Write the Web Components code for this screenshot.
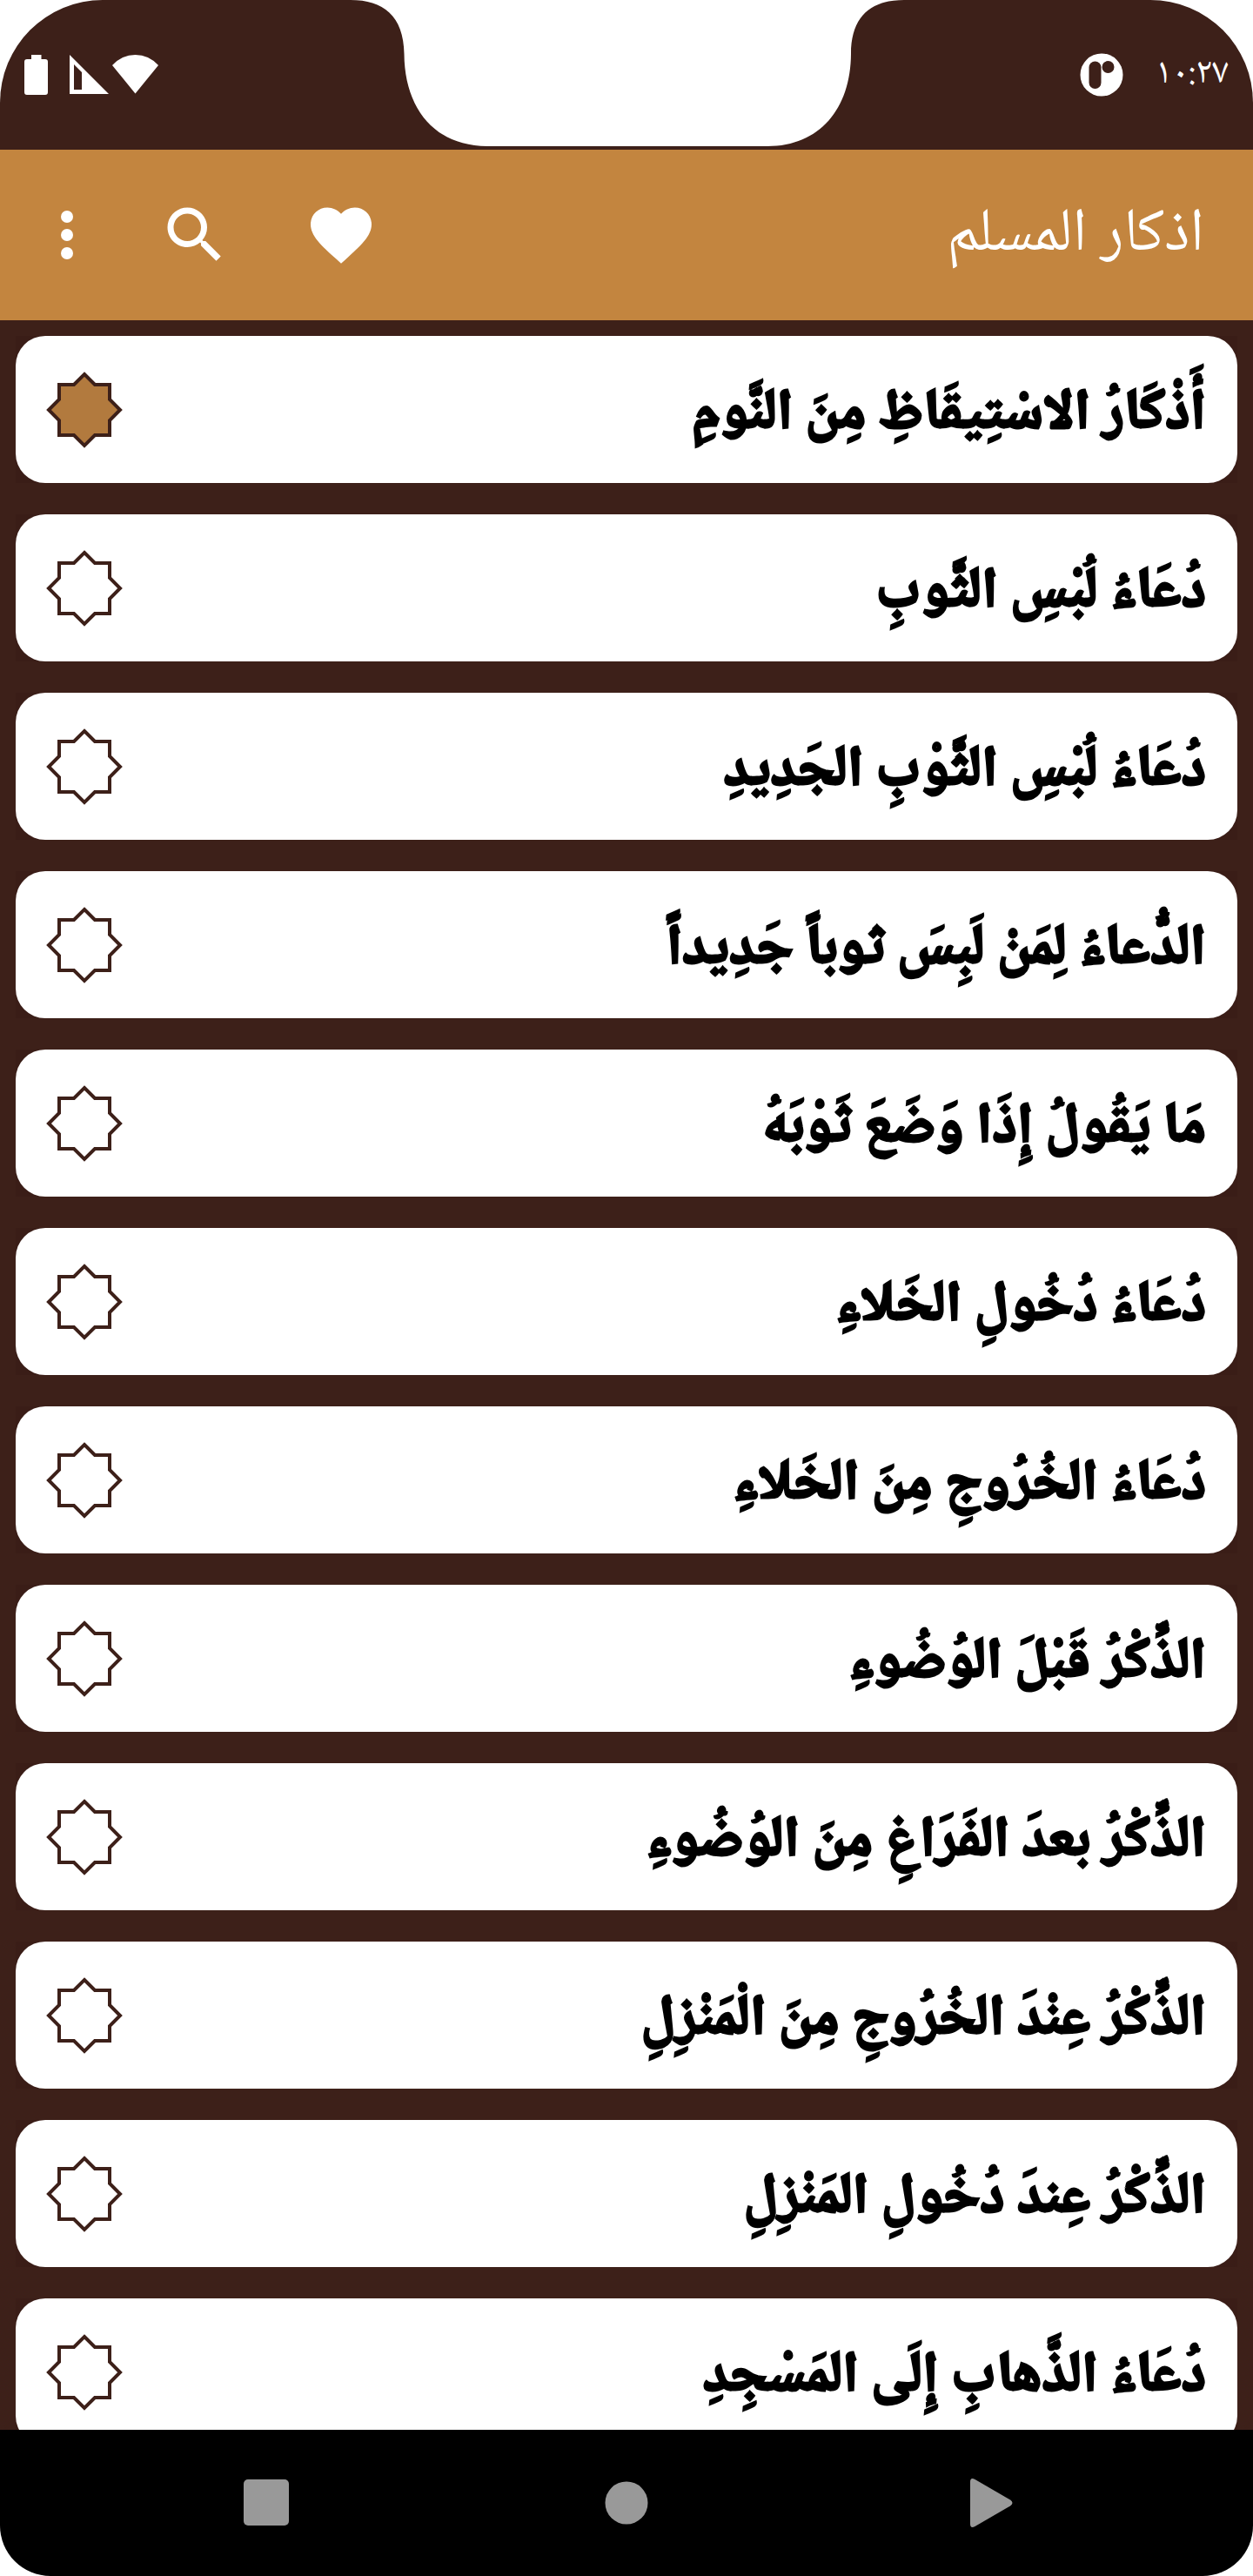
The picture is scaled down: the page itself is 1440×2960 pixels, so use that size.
<!DOCTYPE html>
<html lang="ar" dir="rtl">
<head>
<meta charset="utf-8">
<meta name="viewport" content="width=device-width, initial-scale=1">
<title>اذكار المسلم</title>
<style>
  :root {
    --brown: #3d2019;
    --brown-deep: #3a1d17;
    --gold: #c3853f;
    --gold-dark: #b27a3e;
    --nav-icon: #999;
  }
  html, body { margin: 0; background: #fff; }
  body { font-family: "Noto Naskh Arabic", "Noto Sans Arabic", "DejaVu Sans", sans-serif; }
</style>
</head>
<body>
<app-screen>
  <status-bar slot="status" time="١٠:٢٧"></status-bar>
  <app-bar slot="bar">اذكار المسلم</app-bar>
  <dhikr-card marked>أَذْكَارُ الاسْتِيقَاظِ مِنَ النَّومِ</dhikr-card>
  <dhikr-card>دُعَاءُ لُبْسِ الثَّوبِ</dhikr-card>
  <dhikr-card>دُعَاءُ لُبْسِ الثَّوْبِ الجَدِيدِ</dhikr-card>
  <dhikr-card>الدُّعاءُ لِمَنْ لَبِسَ ثوباً جَدِيداً</dhikr-card>
  <dhikr-card>مَا يَقُولُ إِذَا وَضَعَ ثَوْبَهُ</dhikr-card>
  <dhikr-card>دُعَاءُ دُخُولِ الخَلاءِ</dhikr-card>
  <dhikr-card>دُعَاءُ الخُرُوجِ مِنَ الخَلاءِ</dhikr-card>
  <dhikr-card>الذِّكْرُ قَبْلَ الوُضُوءِ</dhikr-card>
  <dhikr-card>الذِّكْرُ بعدَ الفَرَاغِ مِنَ الوُضُوءِ</dhikr-card>
  <dhikr-card>الذِّكْرُ عِنْدَ الخُرُوجِ مِنَ الْمَنْزِلِ</dhikr-card>
  <dhikr-card>الذِّكْرُ عِندَ دُخُولِ المَنْزِلِ</dhikr-card>
  <dhikr-card>دُعَاءُ الذَّهابِ إِلَى المَسْجِدِ</dhikr-card>
  <nav-bar slot="nav"></nav-bar>
</app-screen>
<script>
const define = (name, html, setup) => {
  const template = document.createElement('template');
  template.innerHTML = html;
  customElements.define(name, class extends HTMLElement {
    constructor() {
      super();
      this.attachShadow({ mode: 'open' }).append(template.content.cloneNode(true));
    }
    connectedCallback() { if (setup) setup(this, this.shadowRoot); }
  });
};

define('app-screen', `
  <style>
    :host { display: flex; flex-direction: column; height: 100vh; overflow: hidden; }
    main {
      flex: 1; min-height: 0; overflow: hidden;
      display: flex; flex-direction: column; gap: 36px;
      padding: 18px 18px 0; background: var(--brown);
    }
  </style>
  <slot name="status"></slot>
  <slot name="bar"></slot>
  <main><slot></slot></main>
  <slot name="nav"></slot>`);

define('status-bar', `
  <style>
    :host {
      display: flex; flex: none; align-items: center; justify-content: space-between;
      box-sizing: border-box; height: 172px; padding: 0 28px;
      position: relative; background: var(--brown); color: #fff;
      border-radius: 118px 118px 0 0;
    }
    div { display: flex; align-items: center; }
    .start { gap: 37px; }
    .end { direction: ltr; }
    svg { display: block; }
    .notch { position: absolute; top: 0; left: 28%; width: 636px; height: 169px; }
    time { font-size: 42px; line-height: 60px; }
  </style>
  <div class="start">
    <time></time>
    <svg width="50" height="50" viewBox="0 0 50 50" aria-hidden="true">
      <circle cx="25" cy="25" r="24.5" fill="#fff"/>
      <rect x="10.500" y="9.500" width="14" height="31.500" rx="7" fill="#3d2019"/>
      <circle cx="32.500" cy="16" r="7" fill="#3d2019"/>
    </svg>
  </div>
  <svg class="notch" viewBox="403 0 636 169" aria-hidden="true">
    <path fill="#fff" d="M403 0C440 0 464 18 464.500 62C465 125 500 168 560 168H882C942 168 977.500 125 978 62C978 18 1002 0 1039 0Z"/>
  </svg>
  <div class="end">
    <svg width="155" height="50" viewBox="28 61 155 50" fill="#fff" aria-hidden="true">
      <path d="M36 63H47.500V68H52a3 3 0 0 1 3 3V106a3 3 0 0 1-3 3H31a3 3 0 0 1-3-3V71a3 3 0 0 1 3-3H36Z"/>
      <path fill-rule="evenodd" d="M80 63V108H125ZM85 74L94 83V103H85Z"/>
      <path d="M155.500 107.500L129 75Q140 63 155.500 63T182 75Z"/>
    </svg>
  </div>`, (host, root) => {
  root.querySelector('time').textContent = host.getAttribute('time');
});

define('app-bar', `
  <style>
    :host {
      display: flex; flex: none; align-items: center; justify-content: space-between;
      box-sizing: border-box; height: 196px; padding-right: 56px;
      background: var(--gold); color: #fff;
    }
    h1 { margin: 0; padding-top: 4px; font-size: 70px; line-height: 100px; font-weight: 400; }
    div { display: flex; }
    button { border: 0; margin: 0; background: none; color: inherit; padding: 42px; }
    .more { padding: 42px 21px 42px 35px; }
    svg { display: block; width: 84px; height: 84px; fill: currentColor; }
  </style>
  <h1><slot></slot></h1>
  <div>
    <button aria-label="المفضلة"><svg viewBox="0 0 24 24"><path d="M12 21.350l-1.450-1.320C5.400 15.360 2 12.280 2 8.500 2 5.420 4.420 3 7.500 3c1.740 0 3.410.810 4.500 2.090C13.090 3.810 14.760 3 16.500 3 19.580 3 22 5.420 22 8.500c0 3.780-3.400 6.860-8.550 11.540L12 21.350z"/></svg></button>
    <button aria-label="بحث"><svg viewBox="0 0 24 24"><path d="M15.500 14h-.790l-.280-.270C15.410 12.590 16 11.110 16 9.500 16 5.910 13.090 3 9.500 3S3 5.910 3 9.500 5.910 16 9.500 16c1.610 0 3.090-.590 4.230-1.570l.270.280v.790l5 4.990L20.490 19l-4.990-5zm-6 0C7.010 14 5 11.990 5 9.500S7.010 5 9.500 5 14 7.010 14 9.500 11.990 14 9.500 14z"/></svg></button>
    <button class="more" aria-label="المزيد"><svg viewBox="0 0 24 24"><circle cx="12" cy="6" r="2"/><circle cx="12" cy="12" r="2"/><circle cx="12" cy="18" r="2"/></svg></button>
  </div>`);

define('dhikr-card', `
  <style>
    :host { display: block; flex: none; background: var(--brown-deep); }
    article {
      display: flex; align-items: center; justify-content: space-between;
      box-sizing: border-box; height: 169px; padding: 0 36px 0 34px;
      background: #fff; border-radius: 34px;
    }
    a {
      padding-top: 14px; color: #000; text-decoration: none; white-space: nowrap;
      font-size: 65px; line-height: 100px; font-weight: 900; -webkit-text-stroke: 3px #000;
    }
    button { border: 0; margin: 0; padding: 0; background: none; color: var(--brown); }
    svg { display: block; width: 90px; height: 90px; fill: none; stroke: currentColor; stroke-width: 4; }
    :host([marked]) svg { fill: var(--gold-dark); }
  </style>
  <article>
    <a href="#"><slot></slot></a>
    <button aria-label="تحديد"><svg viewBox="-45 -45 90 90"><path d="M0-41L12-29H29V-12L41 0L29 12V29H12L0 41L-12 29H-29V12L-41 0L-29-12V-29H-12Z"/></svg></button>
  </article>`, (host, root) => {
  const button = root.querySelector('button');
  button.setAttribute('aria-pressed', host.hasAttribute('marked'));
  button.onclick = () => button.setAttribute('aria-pressed', host.toggleAttribute('marked'));
});

define('nav-bar', `
  <style>
    :host { display: block; flex: none; }
    nav {
      direction: ltr; display: flex; align-items: center; justify-content: center; gap: 330px;
      height: 168px; background: #000; border-radius: 0 0 58px 58px;
    }
    button { border: 0; margin: 0; padding: 0; background: none; }
    svg { display: block; width: 84px; height: 84px; fill: var(--nav-icon); }
  </style>
  <nav>
    <button aria-label="التطبيقات"><svg viewBox="0 0 84 84"><rect x="16" y="15" width="52" height="53" rx="5"/></svg></button>
    <button aria-label="الرئيسية"><svg viewBox="0 0 84 84"><circle cx="42" cy="42" r="24.500"/></svg></button>
    <button aria-label="رجوع"><svg viewBox="0 0 84 84"><path d="M23 18Q23 12 28.500 15L69 38.500Q74 42 69 45.500L28.500 69Q23 72 23 66Z"/></svg></button>
  </nav>`);
</script>
</body>
</html>
